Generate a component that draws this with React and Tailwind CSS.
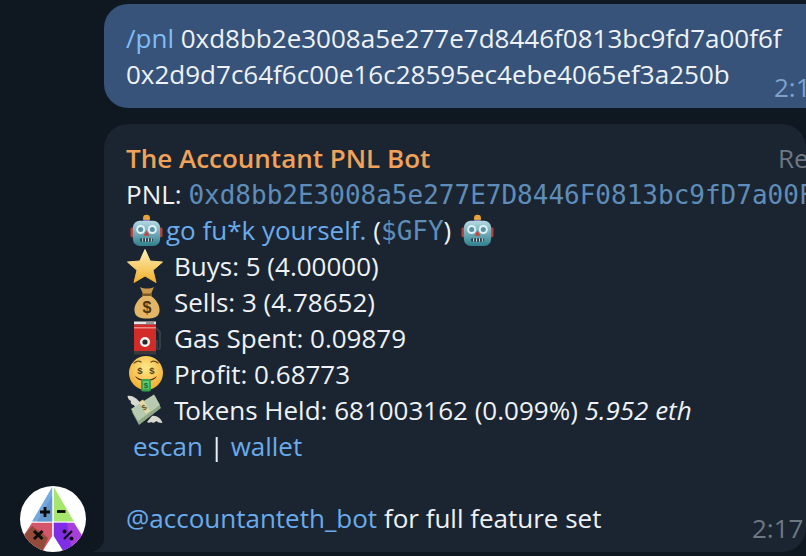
const Robot = ({ className }) => (
  <svg viewBox="0 0 34 34" className={className}>
    <rect x="0.5" y="14" width="4" height="10" rx="1.5" fill="#b5403a" />
    <rect x="29.5" y="14" width="4" height="10" rx="1.5" fill="#b5403a" />
    <circle cx="17" cy="4.5" r="3.6" fill="#e8a33a" />
    <rect x="14" y="6" width="6" height="2" fill="#7a5fc0" />
    <rect x="3" y="7" width="28" height="26" rx="7" fill="url(#rb)" />
    <circle cx="11" cy="16" r="4.6" fill="#dff3f7" />
    <circle cx="23" cy="16" r="4.6" fill="#dff3f7" />
    <circle cx="11" cy="16" r="2.6" fill="#5b8fa3" />
    <circle cx="23" cy="16" r="2.6" fill="#5b8fa3" />
    <path d="M17 17 L20 22.5 H14 Z" fill="#c9423c" />
    <rect x="10.5" y="25" width="13" height="3.5" rx="1" fill="#25414c" />
    <path d="M13 25v3.5M16 25v3.5M19 25v3.5M22 25v3.5" stroke="#cfe2e6" strokeWidth="1" />
    <defs>
      <linearGradient id="rb" x1="0" y1="0" x2="0" y2="1">
        <stop offset="0" stopColor="#b4d8e2" />
        <stop offset="1" stopColor="#2f7f8d" />
      </linearGradient>
    </defs>
  </svg>
);

const Star = () => (
  <svg viewBox="0 0 36 34" className="w-[36px] h-[34px]">
    <defs>
      <linearGradient id="st" x1="0" y1="0" x2="0" y2="1">
        <stop offset="0" stopColor="#fdf0b8" />
        <stop offset="1" stopColor="#f2b02c" />
      </linearGradient>
    </defs>
    <path d="M18 0.5 L23.2 12 L35.5 13 L26 21.3 L29 33.5 L18 27 L7 33.5 L10 21.3 L0.5 13 L12.8 12 Z" fill="url(#st)" stroke="url(#st)" strokeLinejoin="round" />
  </svg>
);

const Bag = () => (
  <svg viewBox="0 0 26 33" className="w-[26px] h-[33px]">
    <path d="M6 1 C10 3 16 3 20 1 L17 8 H9 Z" fill="#c99a4b" />
    <rect x="8" y="7.5" width="10" height="2.5" fill="#7d5a22" />
    <path d="M9 10 H17 C23 14 26 20 25.5 25 C25 31 20 32.5 13 32.5 C6 32.5 1 31 0.5 25 C0 20 3 14 9 10 Z" fill="#e3b566" />
    <text x="13" y="27" textAnchor="middle" fontFamily="'Liberation Sans', sans-serif" fontWeight="700" fontSize="16" fill="#4a3514">$</text>
  </svg>
);

const Pump = () => (
  <svg viewBox="0 0 30 34" className="w-[30px] h-[34px]">
    <rect x="1" y="0.5" width="22" height="3" fill="#e5e5e5" />
    <rect x="1" y="3.5" width="22" height="27" fill="#d32b28" />
    <rect x="13" y="1" width="8" height="2" fill="#9a9a9a" />
    <rect x="1" y="6" width="22" height="1.5" fill="#e88a86" />
    <rect x="1" y="30" width="22" height="3.5" fill="#3a3a3c" />
    <circle cx="12" cy="21" r="5" fill="#f4f4f4" />
    <circle cx="12" cy="21" r="2.6" fill="#2a2a2a" />
    <path d="M23 7 L27 11 V26 C27 29 24 29 24 26 V19" fill="none" stroke="#3f454b" strokeWidth="1.5" />
  </svg>
);

const Face = () => (
  <svg viewBox="0 0 34 36" className="w-[34px] h-[36px]">
    <defs>
      <radialGradient id="fc" cx="0.5" cy="0.35" r="0.7">
        <stop offset="0" stopColor="#ffe88a" />
        <stop offset="1" stopColor="#f0a82a" />
      </radialGradient>
    </defs>
    <circle cx="17" cy="17" r="17" fill="url(#fc)" />
    <path d="M5 7 Q9 4 12 6 M22 6 Q25 4 29 7" fill="none" stroke="#6b4a1a" strokeWidth="1.3" strokeLinecap="round" />
    <text x="11" y="18" textAnchor="middle" fontFamily="'Liberation Sans', sans-serif" fontWeight="700" fontSize="9.5" fill="#5b3d12">$</text>
    <text x="23" y="18" textAnchor="middle" fontFamily="'Liberation Sans', sans-serif" fontWeight="700" fontSize="9.5" fill="#5b3d12">$</text>
    <path d="M6 20 Q17 28 28 20 Q26 25 17 25 Q8 25 6 20 Z" fill="#5b2c14" />
    <rect x="12" y="23" width="10" height="12.5" rx="2.5" fill="#37a64a" />
    <rect x="14" y="25" width="6" height="8" fill="#5fc46f" />
    <text x="17" y="32" textAnchor="middle" fontFamily="'Liberation Sans', sans-serif" fontWeight="700" fontSize="8" fill="#1d6a2c">$</text>
  </svg>
);

const Wings = () => (
  <svg viewBox="0 0 36 32" className="w-[36px] h-[32px]">
    <path d="M14 10 C10 4 5 1 0.5 2 C1 5 2 6 4 7 C3 9 5 11 7 11 C7 13 9 14 11 14 Z" fill="#d9d9d0" />
    <path d="M25 22 C29 21 34 24 35.5 29 C32 29 31 28 29 27 C28 29 26 29 24 28 C23 29 21 29 20 28 Z" fill="#d9d9d0" />
    <path d="M5 18 L28 2 L34 14 L12 31 Z" fill="#8fa987" />
    <path d="M4 15 L27 0.5 L33 11 L11 27 Z" fill="#b8cbb0" />
    <path d="M12 8 L19 20 L23 17 L16 5.5 Z" fill="#e6d9a6" />
    <text x="17.5" y="16" textAnchor="middle" fontFamily="'Liberation Sans', sans-serif" fontWeight="700" fontSize="8" fill="#6a5a2a" transform="rotate(-32 17.5 14)">$</text>
  </svg>
);

const Logo = () => (
  <svg viewBox="0 0 66 66" className="w-[66px] h-[66px] shrink-0">
    <circle cx="33" cy="33" r="33" fill="#fff" />
    <defs>
      <clipPath id="lc"><circle cx="33" cy="33" r="33" /></clipPath>
    </defs>
    <g clipPath="url(#lc)">
      <path d="M32.2 1 L12 35.5 H32.2 Z" fill="#74a8e0" />
      <path d="M32.2 10 L17 35.5 H32.2 Z" fill="#5b8cb8" opacity="0.6" />
      <path d="M33.8 1 L54 35.5 H33.8 Z" fill="#a6e66f" />
      <path d="M12 36.8 H32.2 V50 L22 66 L-3 60 Z" fill="#d4566a" />
      <path d="M5 48 L12 40 L22 47 L28 52 L22 66 L-3 60 Z" fill="#7e4a2a" opacity="0.75" />
      <path d="M33.8 36.8 H54 L70 62 L44 66 L33.8 50 Z" fill="#a83fdc" />
      <path d="M33.8 36.8 H47 L52 66 H44 L33.8 50 Z" fill="#6d28e8" opacity="0.7" />
    </g>
    <path d="M20 26h10M25 21v10" stroke="#0b0b0b" strokeWidth="2.8" />
    <path d="M37 25.5h8.5" stroke="#0b0b0b" strokeWidth="2.8" />
    <path d="M14 45 L22.5 53 M22.5 45 L14 53" stroke="#0b0b0b" strokeWidth="3" />
    <path d="M52 45 L44 53" stroke="#0b0b0b" strokeWidth="2.2" />
    <circle cx="44.5" cy="45.5" r="2" fill="#0b0b0b" />
    <circle cx="51.5" cy="52.5" r="2" fill="#0b0b0b" />
  </svg>
);

const Row = ({ icon, iconClass, children }) => (
  <div className="flex h-[36px] items-center">
    <span className={"flex shrink-0 items-center justify-start " + iconClass}>{icon}</span>
    <span className="whitespace-nowrap">{children}</span>
  </div>
);

const mono = { fontFamily: "'DejaVu Sans Mono', monospace" };

export default function App() {
  return (
    <div
      className="w-[806px] h-[556px] overflow-hidden bg-[#0f1720] pt-1 text-[26px] leading-[36px] text-[#eef2f6]"
      style={{ fontFamily: "'Open Sans', 'Noto Sans', sans-serif" }}
    >
      <div className="relative ml-[104px] w-[760px] rounded-[24px] bg-[#37537a] pl-[22px] pt-[16px] pb-[16px] whitespace-nowrap">
        <div>
          <span className="text-[#7fbdf7]">/pnl</span> 0xd8bb2e3008a5e277e7d8446f0813bc9fd7a00f6f
        </div>
        <div>0x2d9d7c64f6c00e16c28595ec4ebe4065ef3a250b</div>
        <span className="absolute left-[670px] top-[65px] text-[#7fa2cb]">2:17</span>
      </div>

      <div className="relative mt-4 flex items-end">
        <div className="ml-5 mb-[4px] z-10"><Logo /></div>
        <svg viewBox="0 0 12 14" className="absolute left-[92px] bottom-[4px] w-[12px] h-[14px]">
          <path d="M12 0 C12 6 8 12 0 14 H12 Z" fill="#1b2531" />
        </svg>
        <div className="relative ml-[18px] mb-[4px] w-[760px] rounded-[24px] rounded-bl-none bg-[#1b2531] pl-[22px] pt-[16px] pb-[16px] whitespace-nowrap overflow-hidden">
          <div className="flex h-[36px]">
            <span className="font-semibold text-[#f0a25a]">The Accountant PNL Bot</span>
            <span className="absolute left-[674px] top-[16px] text-[#6d7883]">Re</span>
          </div>
          <div className="h-[36px]">
            PNL: <span className="text-[#5f8db9]" style={mono}>0xd8bb2E3008a5e277E7D8446F0813bc9fD7a00F</span>
          </div>
          <div className="flex h-[36px] items-center">
            <Robot className="ml-[4px] mr-[3px] w-[33px] h-[33px] shrink-0" />
            <span className="text-[#6aabec]">go fu*k yourself.</span>
            <span className="ml-[7px]">(<span className="text-[#5f8db9]" style={mono}>$GFY</span>)</span>
            <Robot className="ml-[10px] w-[33px] h-[33px] shrink-0" />
          </div>
          <Row icon={<Star />} iconClass="w-[48px] pl-[1px]"><>Buys: 5 (4.00000)</></Row>
          <Row icon={<Bag />} iconClass="w-[48px] pl-[8px]"><>Sells: 3 (4.78652)</></Row>
          <Row icon={<Pump />} iconClass="w-[48px] pl-[7px]"><>Gas Spent: 0.09879</></Row>
          <Row icon={<Face />} iconClass="w-[48px] pl-[3px]"><>Profit: 0.68773</></Row>
          <Row icon={<Wings />} iconClass="w-[48px] pl-[1px]">
            <><span className="tracking-[-3px]">T</span>okens Held: 681003162 (0.099%) <em>5.952 eth</em></>
          </Row>
          <div className="h-[36px] pl-[7px]">
            <span className="text-[#6aabec]">escan</span> | <span className="text-[#6aabec]">wallet</span>
          </div>
          <div className="h-[36px]" />
          <div className="h-[36px]">
            <span className="text-[#6aabec]">@accountanteth_bot</span> for full feature set
          </div>
          <span className="absolute left-[648px] bottom-[6px] text-[#6d7883]">2:17</span>
        </div>
      </div>
    </div>
  );
}
